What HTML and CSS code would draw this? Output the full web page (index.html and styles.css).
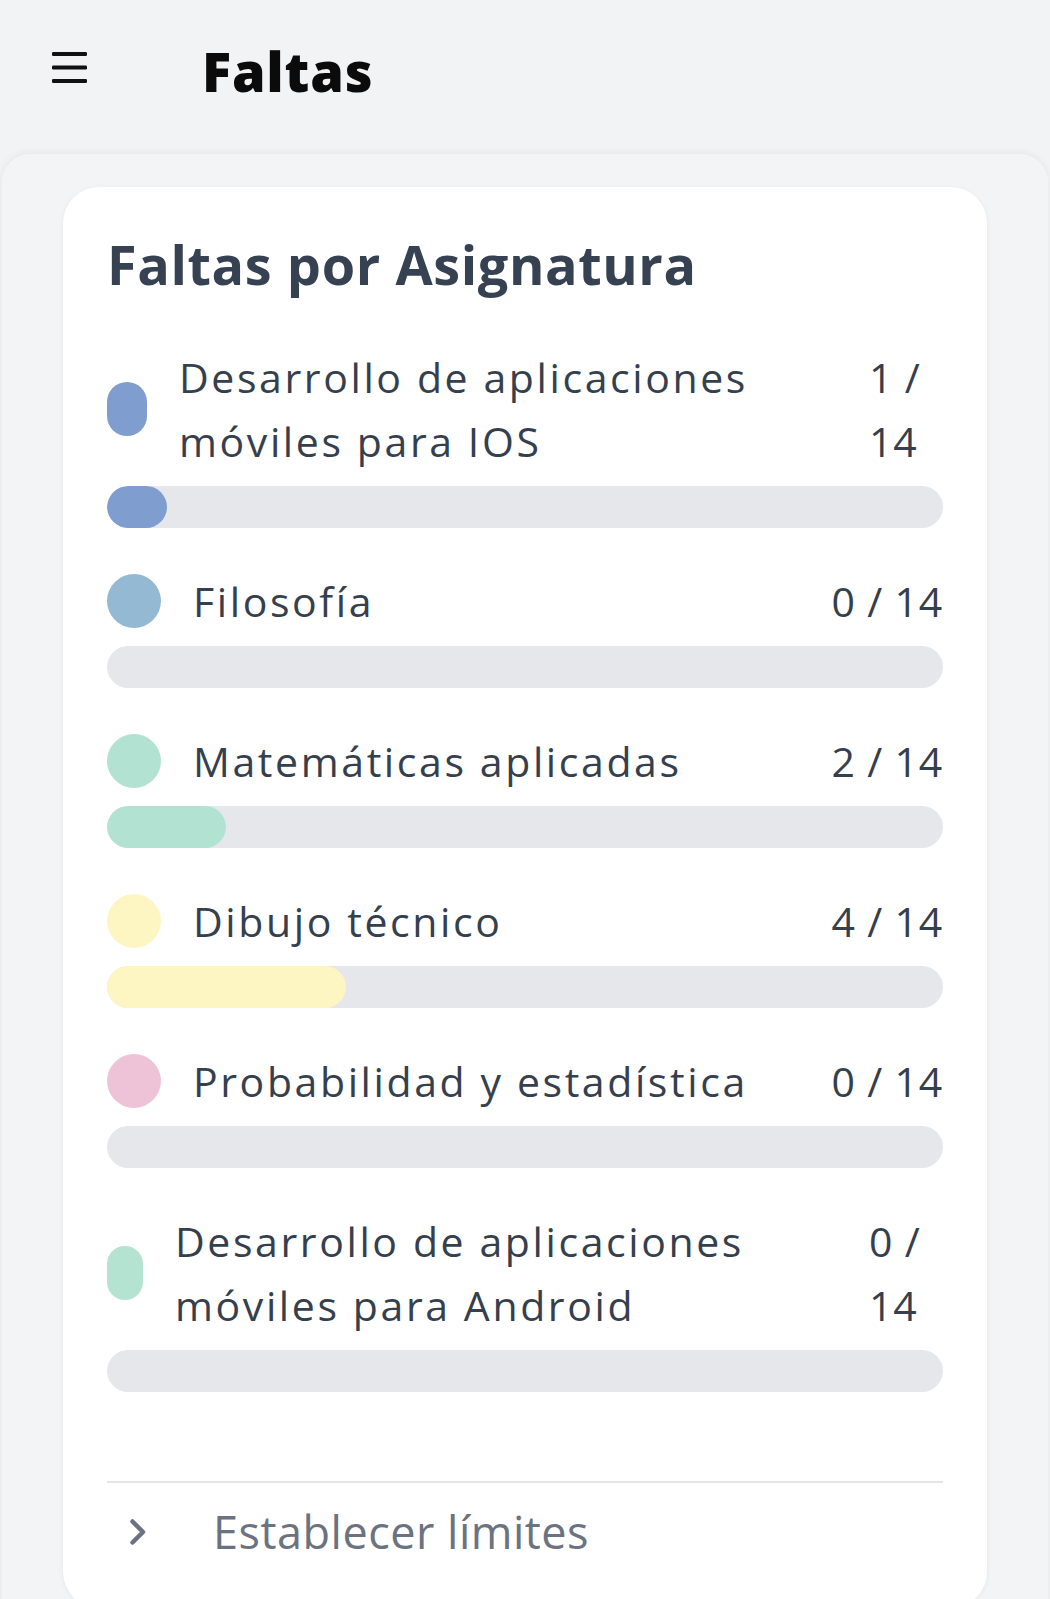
FILE: index.html
```html
<!DOCTYPE html>
<html lang="es">
<head>
<meta charset="utf-8">
<title>Faltas</title>
<link rel="stylesheet" href="styles.css">
</head>
<body>
<header class="topbar">
  <svg class="menu-icon" width="35" height="31" viewBox="0 0 35 31" aria-hidden="true">
    <rect x="0" y="0" width="35" height="4" rx="1.2"/>
    <rect x="0" y="13.5" width="35" height="4" rx="1.2"/>
    <rect x="0" y="27" width="35" height="4" rx="1.2"/>
  </svg>
  <h1 class="page-title">Faltas</h1>
</header>

<main class="panel">
  <section class="card">
    <h2 class="card-title">Faltas por Asignatura</h2>

    <ul class="subjects">
      <li class="subject">
        <div class="subject-head subject-head--wrap">
          <span class="dot dot--w40 c-blue"></span>
          <span class="name">Desarrollo de aplicaciones móviles para IOS</span>
          <span class="count">1 / 14</span>
        </div>
        <div class="bar"><div class="fill c-blue" style="width:7.14%"></div></div>
      </li>
      <li class="subject">
        <div class="subject-head">
          <span class="dot c-steel"></span>
          <span class="name">Filosofía</span>
          <span class="count">0 / 14</span>
        </div>
        <div class="bar"><div class="fill c-steel" style="width:0%"></div></div>
      </li>
      <li class="subject">
        <div class="subject-head">
          <span class="dot c-mint"></span>
          <span class="name">Matemáticas aplicadas</span>
          <span class="count">2 / 14</span>
        </div>
        <div class="bar"><div class="fill c-mint" style="width:14.29%"></div></div>
      </li>
      <li class="subject">
        <div class="subject-head">
          <span class="dot c-yellow"></span>
          <span class="name">Dibujo técnico</span>
          <span class="count">4 / 14</span>
        </div>
        <div class="bar"><div class="fill c-yellow" style="width:28.57%"></div></div>
      </li>
      <li class="subject">
        <div class="subject-head">
          <span class="dot c-pink"></span>
          <span class="name">Probabilidad y estadística</span>
          <span class="count">0 / 14</span>
        </div>
        <div class="bar"><div class="fill c-pink" style="width:0%"></div></div>
      </li>
      <li class="subject">
        <div class="subject-head subject-head--wrap">
          <span class="dot dot--w36 c-green"></span>
          <span class="name">Desarrollo de aplicaciones móviles para Android</span>
          <span class="count">0 / 14</span>
        </div>
        <div class="bar"><div class="fill c-green" style="width:0%"></div></div>
      </li>
    </ul>

    <div class="card-footer">
      <svg class="chevron" width="18" height="28" viewBox="0 0 18 28" aria-hidden="true">
        <polyline points="3.5,3.5 14,14 3.5,24.5" />
      </svg>
      <span class="footer-link">Establecer límites</span>
    </div>
  </section>
</main>
</body>
</html>
```

FILE: styles.css
```css
* {
  box-sizing: border-box;
}

html,
body {
  margin: 0;
  padding: 0;
}

body {
  background: #f2f3f5;
  font-family: "Open Sans", "Noto Sans", sans-serif;
  color: #363f4d;
  overflow: hidden;
}

/* ---------- top bar ---------- */
.topbar {
  height: 154px;
  display: flex;
  align-items: flex-start;
  padding: 39px 0 0 52px;
}

.menu-icon {
  fill: #111111;
  margin-top: 13px;
  flex: none;
}

.page-title {
  margin: 0 0 0 115px;
  font-size: 54px;
  line-height: 64px;
  font-weight: 800;
  letter-spacing: 0.8px;
  color: #0b0b0b;
}

/* ---------- panel & card ---------- */
.panel {
  margin: 0 2px;
  min-height: 1460px;
  background: #f3f4f6;
  border-radius: 28px 28px 0 0;
  box-shadow: 0 -1px 8px rgba(0, 0, 0, 0.06);
  padding: 33px 61px 0;
}

.card {
  background: #ffffff;
  border-radius: 36px;
  box-shadow: 0 1px 5px rgba(0, 0, 0, 0.06);
  padding: 45px 44px 44px;
}

.card-title {
  margin: 0 0 49px;
  font-size: 54px;
  line-height: 64px;
  font-weight: 700;
  letter-spacing: 0.6px;
  color: #364152;
}

/* ---------- subjects ---------- */
.subjects {
  list-style: none;
  margin: 0 0 89px;
  padding: 0;
  display: flex;
  flex-direction: column;
  gap: 41px;
}

.subject-head {
  display: flex;
  align-items: center;
  gap: 32px;
  font-size: 41px;
  line-height: 64px;
  letter-spacing: 2.6px;
  margin-bottom: 13px;
}

.dot {
  flex: none;
  width: 54px;
  height: 54px;
  border-radius: 27px;
}

.dot--w40 {
  width: 40px;
}

.dot--w36 {
  width: 36px;
}

.name {
  flex: 1 1 0;
  min-width: 0;
}

.count {
  flex: none;
  white-space: nowrap;
  letter-spacing: 0.8px;
}

.subject-head--wrap .count {
  white-space: normal;
  width: 74px;
}

.bar {
  height: 42px;
  border-radius: 21px;
  background: #e5e7eb;
  overflow: hidden;
}

.fill {
  height: 100%;
  border-radius: 21px;
}

.c-blue { background: #809dd0; }
.c-steel { background: #94b9d2; }
.c-mint { background: #b2e2d2; }
.c-yellow { background: #fdf6c3; }
.c-pink { background: #efc3d7; }
.c-green { background: #b4e3d1; }

/* ---------- footer ---------- */
.card-footer {
  border-top: 2px solid #e3e5e8;
  padding: 17px 0 0 22px;
  display: flex;
  align-items: center;
  gap: 66px;
}

.chevron {
  flex: none;
  fill: none;
  stroke: #6b7280;
  stroke-width: 4.5;
  stroke-linecap: round;
  stroke-linejoin: round;
}

.footer-link {
  font-size: 45px;
  line-height: 64px;
  letter-spacing: 0.5px;
  color: #6b7280;
}
```
